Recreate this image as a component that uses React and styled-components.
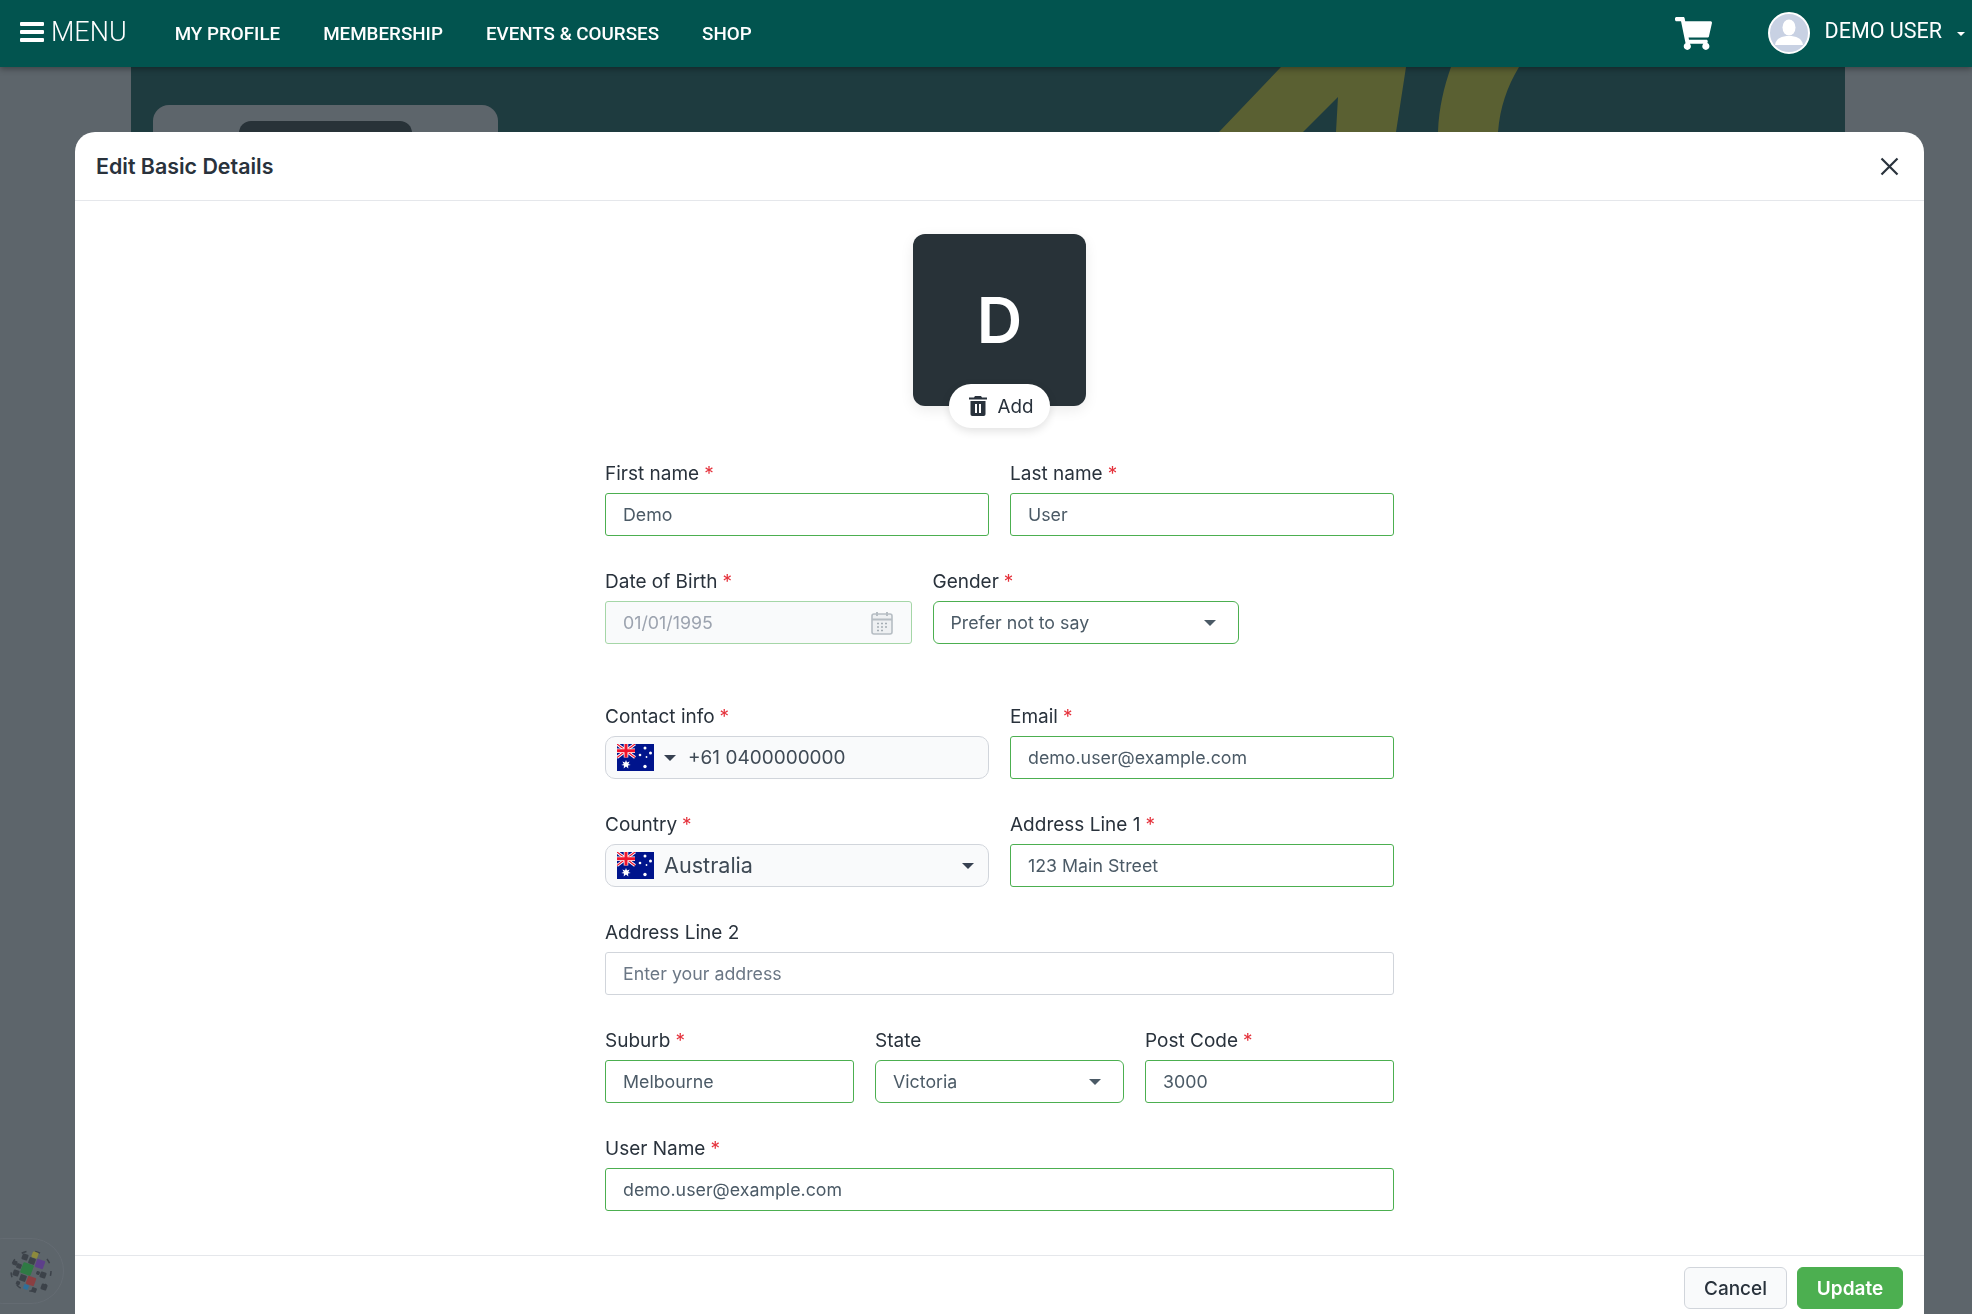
import React from "react";
import styled, { createGlobalStyle } from "styled-components";
import { FaShoppingCart } from "react-icons/fa";

const GlobalStyle = createGlobalStyle`
  html, body {
    margin: 0;
    height: 100%;
    overflow: hidden;
    background: #cacfcf;
    font-family: Inter, "Liberation Sans", sans-serif;
  }
  * {
    box-sizing: border-box;
  }
`;

const NavBar = styled.header`
  position: relative;
  z-index: 3;
  height: 67px;
  display: flex;
  align-items: center;
  padding: 0 7px 0 20px;
  background: #02544f;
  box-shadow: 0 2px 6px rgba(0, 0, 0, 0.35);
  color: #fff;
  font-family: Roboto, sans-serif;
`;

const MenuButton = styled.div`
  display: flex;
  align-items: center;
  gap: 7px;
  font-size: 27px;
  font-weight: 300;
  margin-right: 48px;
  margin-top: -3px;
`;

const Burger = styled.span`
  display: flex;
  flex-direction: column;
  gap: 4px;
  width: 24px;
  span {
    height: 4px;
    background: #fff;
    border-radius: 1px;
  }
`;

const NavLinks = styled.nav`
  display: flex;
  gap: 43px;
  font-size: 18.800px;
  font-weight: 500;
  flex: 1;
`;

const CartIcon = styled(FaShoppingCart)`
  font-size: 37px;
  margin-right: 56px;
`;

const AvatarSlot = styled.span`
  display: flex;
  margin-top: -2px;
`;

const UserName = styled.span`
  font-size: 21.500px;
  margin: -6px 15px 0 15px;
`;

const Page = styled.main`
  height: 1247px;
  padding: 0 127px 0 131px;
`;

const Hero = styled.section`
  position: relative;
  height: 100%;
  background: #2f6661;
  padding: 38px 0 0 22px;
`;

const HeroMark = styled.svg`
  position: absolute;
  top: 0;
  left: 1088px;
`;

const ProfileCard = styled.div`
  width: 345px;
  height: 400px;
  padding: 16px 86px;
  background: #cacfcf;
  border-radius: 16px;
`;

const ProfilePhoto = styled.div`
  height: 173px;
  background: #465050;
  border-radius: 12px;
`;

const Backdrop = styled.div`
  position: fixed;
  inset: 0;
  z-index: 1;
  background: rgba(20, 30, 40, 0.6);
`;

const HelpBadge = styled.div`
  position: fixed;
  left: -30px;
  top: 1238px;
  z-index: 2;
  width: 94px;
  height: 66px;
  display: flex;
  align-items: center;
  justify-content: flex-end;
  padding-right: 10px;
  border: 1px solid #646b72;
  border-radius: 33px;
  background: #5d656b;
`;

const Modal = styled.div`
  position: fixed;
  z-index: 2;
  top: 132px;
  left: 75px;
  width: 1849px;
  height: 1200px;
  display: flex;
  flex-direction: column;
  background: #fff;
  border-radius: 20px 20px 0 0;
  color: #29323c;
`;

const ModalHeader = styled.div`
  height: 69px;
  flex: none;
  display: flex;
  align-items: center;
  justify-content: space-between;
  padding: 0 25px 0 21px;
  border-bottom: 1px solid #e5e7eb;
`;

const ModalTitle = styled.h2`
  margin: 0;
  font-size: 21.400px;
  font-weight: 600;
`;

const ModalBody = styled.div`
  flex: 1;
  padding-top: 33px;
`;

const AvatarWrap = styled.div`
  position: relative;
  width: 173px;
  height: 172px;
  margin: 0 auto 56px;
`;

const AvatarTile = styled.div`
  height: 100%;
  display: flex;
  align-items: center;
  justify-content: center;
  background: #283238;
  border-radius: 12px;
  color: #fff;
  font-size: 63px;
  font-weight: 600;
  box-shadow: 0 4px 14px rgba(0, 0, 0, 0.08);
`;

const AddPill = styled.div`
  position: absolute;
  left: 36px;
  bottom: -22px;
  width: 101px;
  height: 44px;
  display: flex;
  align-items: center;
  justify-content: center;
  gap: 11px;
  padding-left: 3px;
  background: #fff;
  border-radius: 22px;
  box-shadow: 0 3px 10px rgba(0, 0, 0, 0.12);
  font-size: 18.800px;
`;

const Form = styled.div`
  width: 789px;
  margin: 0 auto;
  display: flex;
  flex-direction: column;
  gap: 34px;
`;

const Row = styled.div`
  display: grid;
  grid-template-columns: repeat(${(p) => p.$cols || 1}, 1fr);
  gap: 21px;
  width: ${(p) => p.$width || "100%"};
  margin-bottom: ${(p) => p.$extra || 0}px;
`;

const Field = styled.div`
  min-width: 0;
`;

const Label = styled.div`
  height: 24px;
  margin-bottom: 7px;
  font-size: 19px;
  line-height: 24px;
  color: #29323c;
`;

const Star = styled.span`
  color: #e5323c;
  margin-left: 5px;
`;

const Control = styled.div`
  height: 43px;
  display: flex;
  align-items: center;
  justify-content: space-between;
  padding: 0 ${(p) => p.$right || 17}px 0 17px;
  border: 1px solid #4caf50;
  border-radius: ${(p) => p.$radius || 3}px;
  background: #fff;
  font-size: 17.800px;
  color: #4b5a66;
`;

const DisabledControl = styled(Control)`
  background: #f9fafb;
  border-color: #a5d6a7;
  color: #9ca3af;
`;

const EmptyControl = styled(Control)`
  border-color: #d1d5db;
  color: #6b7785;
`;

const FlagControl = styled(Control)`
  justify-content: flex-start;
  padding: 0 14px 0 11px;
  gap: 10px;
  background: #f9fafb;
  border-color: #d1d5db;
  border-radius: 10px;
  font-size: ${(p) => p.$size || 19}px;
  color: #3f4a55;
`;

const PhoneNumber = styled.span`
  margin-left: 2px;
`;

const CountryName = styled.span`
  margin-top: -2px;
`;

const Caret = styled.span`
  flex: none;
  width: 0;
  height: 0;
  margin-left: ${(p) => (p.$auto ? "auto" : "0")};
  border-left: ${(p) => p.$half || 6}px solid transparent;
  border-right: ${(p) => p.$half || 6}px solid transparent;
  border-top: ${(p) => p.$half || 6}px solid ${(p) => p.$color || "#374151"};
`;

const ModalFooter = styled.div`
  flex: none;
  height: 77px;
  display: flex;
  justify-content: flex-end;
  align-items: flex-start;
  gap: 10px;
  padding: 11px 21px 0 0;
  border-top: 1px solid #e5e7eb;
`;

const FooterButton = styled.div`
  height: 42px;
  display: flex;
  align-items: center;
  justify-content: center;
  width: ${(p) => (p.$primary ? 106 : 103)}px;
  border: 1px solid ${(p) => (p.$primary ? "#4caf50" : "#d1d5db")};
  border-radius: 6px;
  background: ${(p) => (p.$primary ? "#4caf50" : "#f9fafb")};
  color: ${(p) => (p.$primary ? "#fff" : "#29323c")};
  font-size: 19px;
  font-weight: ${(p) => (p.$primary ? 600 : 500)};
`;

const AuFlag = () => (
  <svg width="37" height="27" viewBox="0 0 37 27">
    <rect width="37" height="27" fill="#00148c" />
    <path d="M0 0L18 13.500M18 0L0 13.500" stroke="#fff" strokeWidth="3" />
    <path d="M0 0L18 13.500M18 0L0 13.500" stroke="#f0142d" strokeWidth="1.200" />
    <path d="M9 0V13.500M0 6.750H18" stroke="#fff" strokeWidth="4.500" />
    <path d="M9 0V13.500M0 6.750H18" stroke="#f0142d" strokeWidth="3" />
    <g fill="#fff">
      <path d="M9 16l1 2.600 2.600-1-1.300 2.400 2.400 1.100-2.700.5.3 2.800-2.300-2-2.300 2 .3-2.800-2.700-.5 2.400-1.100-1.300-2.400 2.600 1z" />
      <circle cx="28" cy="4" r="1.500" />
      <circle cx="33.500" cy="9" r="1.500" />
      <circle cx="23" cy="11" r="1.300" />
      <circle cx="29.500" cy="13" r="0.900" />
      <circle cx="28" cy="22.500" r="1.700" />
    </g>
  </svg>
);

const CalendarIcon = () => (
  <svg width="22" height="24" viewBox="0 0 22 24">
    <rect x="1" y="3" width="20" height="20" rx="2" fill="#eef0f2" stroke="#b6bdc3" strokeWidth="1.600" />
    <path d="M1 8.500h20" stroke="#b6bdc3" strokeWidth="2" />
    <path d="M6 1v4M16 1v4" stroke="#b6bdc3" strokeWidth="2" />
    <path d="M6 12.500h2M10 12.500h2M14 12.500h2M6 16h2M10 16h2M14 16h2M6 19.500h2M10 19.500h2" stroke="#a5adb4" strokeWidth="1.600" />
  </svg>
);

const TrashIcon = () => (
  <svg width="18" height="20" viewBox="0 0 18 20">
    <path
      fill="#29323c"
      fillRule="evenodd"
      d="M6 0h6l1 1.500h5v2H0v-2h5zM1.500 5h15v13.200a1.800 1.800 0 0 1-1.800 1.800H3.300a1.800 1.800 0 0 1-1.800-1.800zM6 8v9h2V8zm4 0v9h2V8z"
    />
  </svg>
);

const CloseIcon = () => (
  <svg width="19" height="19" viewBox="0 0 19 19">
    <path d="M1.500 1.500L17.500 17.500M17.500 1.500L1.500 17.500" stroke="#29323c" strokeWidth="2.200" />
  </svg>
);

const UserAvatar = () => (
  <svg width="42" height="42" viewBox="0 0 42 42">
    <circle cx="21" cy="21" r="20" fill="#c8d1e3" stroke="#fff" strokeWidth="2" />
    <ellipse cx="21" cy="15.500" rx="6.500" ry="8" fill="#fff" />
    <path d="M7 33c1-7 7-9 14-9s13 2 14 9z" fill="#fff" />
  </svg>
);

// tile positions read off the crop of the badge: x, y, size, fill
const GLOBE_TILES = [
  [25, 37, 6, "#3c4249"],
  [32, 41, 6.500, "#3c4249"],
  [15, 43, 4.500, "#3c4249"],
  [19, 46, 5, "#3c4249"],
  [16, 53, 6, "#3c4249"],
  [23, 58, 6.500, "#3c4249"],
  [18, 63, 4, "#3c4249"],
  [38, 53, 3.500, "#3c4249"],
  [43, 55, 6, "#3c4249"],
  [44, 67, 6, "#3c4249"],
  [34, 70, 5, "#3c4249"],
  [35, 35, 6, "#8d8a3c"],
  [40, 44, 8.500, "#5d3f8a"],
  [27, 49, 11, "#2f7a44"],
  [31, 61, 8.500, "#8a3f42"],
  [26, 67, 5, "#2f6f9a"],
];

const GlobeLogo = () => (
  <svg width="44" height="46" viewBox="9 28 44 46">
    <circle cx="31" cy="51" r="20" fill="none" stroke="#3c4249" strokeWidth="1.500" strokeDasharray="5 9" />
    {GLOBE_TILES.map(([x, y, s, fill]) => (
      <rect
        key={`${x}-${y}`}
        x={x - s / 2}
        y={y - s / 2}
        width={s}
        height={s}
        rx="1"
        fill={fill}
        transform={`rotate(20 ${x} ${y})`}
      />
    ))}
  </svg>
);

const TextField = ({ label, required, value }) => (
  <Field>
    <Label>
      {label}
      {required && <Star>*</Star>}
    </Label>
    <Control>{value}</Control>
  </Field>
);

const SelectField = ({ label, required, value }) => (
  <Field>
    <Label>
      {label}
      {required && <Star>*</Star>}
    </Label>
    <Control $radius={6} $right={22}>
      {value}
      <Caret $color="#4b5a66" />
    </Control>
  </Field>
);

const App = () => (
  <>
    <GlobalStyle />
    <NavBar>
      <MenuButton>
        <Burger>
          <span />
          <span />
          <span />
        </Burger>
        MENU
      </MenuButton>
      <NavLinks>
        <span>MY PROFILE</span>
        <span>MEMBERSHIP</span>
        <span>EVENTS &amp; COURSES</span>
        <span>SHOP</span>
      </NavLinks>
      <CartIcon />
      <AvatarSlot>
        <UserAvatar />
      </AvatarSlot>
      <UserName>DEMO USER</UserName>
      <Caret $color="#fff" $half={4} />
    </NavBar>

    <Page>
      <Hero>
        <HeroMark width="320" height="65" viewBox="0 0 320 65">
          <path d="M0 65L62 0H187L177 65H117L119 30L84 65z" fill="#c3c341" />
          <path d="M232 0H300C288 20 281 40 279 65H219C220 40 225 20 232 0z" fill="#c3c341" />
        </HeroMark>
        <ProfileCard>
          <ProfilePhoto />
        </ProfileCard>
      </Hero>
    </Page>

    <Backdrop />
    <HelpBadge>
      <GlobeLogo />
    </HelpBadge>

    <Modal>
      <ModalHeader>
        <ModalTitle>Edit Basic Details</ModalTitle>
        <CloseIcon />
      </ModalHeader>
      <ModalBody>
        <AvatarWrap>
          <AvatarTile>D</AvatarTile>
          <AddPill>
            <TrashIcon />
            Add
          </AddPill>
        </AvatarWrap>
        <Form>
          <Row $cols={2}>
            <TextField label="First name" required value="Demo" />
            <TextField label="Last name" required value="User" />
          </Row>
          <Row $cols={2} $width="634px" $extra={27}>
            <Field>
              <Label>
                Date of Birth<Star>*</Star>
              </Label>
              <DisabledControl $right={18}>
                01/01/1995
                <CalendarIcon />
              </DisabledControl>
            </Field>
            <SelectField label="Gender" required value="Prefer not to say" />
          </Row>
          <Row $cols={2}>
            <Field>
              <Label>
                Contact info<Star>*</Star>
              </Label>
              <FlagControl>
                <AuFlag />
                <Caret />
                <PhoneNumber>+61 0400000000</PhoneNumber>
              </FlagControl>
            </Field>
            <TextField label="Email" required value="demo.user@example.com" />
          </Row>
          <Row $cols={2}>
            <Field>
              <Label>
                Country<Star>*</Star>
              </Label>
              <FlagControl $size={21.600}>
                <AuFlag />
                <CountryName>Australia</CountryName>
                <Caret $auto />
              </FlagControl>
            </Field>
            <TextField label="Address Line 1" required value="123 Main Street" />
          </Row>
          <Row>
            <Field>
              <Label>Address Line 2</Label>
              <EmptyControl>Enter your address</EmptyControl>
            </Field>
          </Row>
          <Row $cols={3}>
            <TextField label="Suburb" required value="Melbourne" />
            <SelectField label="State" value="Victoria" />
            <TextField label="Post Code" required value="3000" />
          </Row>
          <Row>
            <TextField label="User Name" required value="demo.user@example.com" />
          </Row>
        </Form>
      </ModalBody>
      <ModalFooter>
        <FooterButton>Cancel</FooterButton>
        <FooterButton $primary>Update</FooterButton>
      </ModalFooter>
    </Modal>
  </>
);

export default App;
